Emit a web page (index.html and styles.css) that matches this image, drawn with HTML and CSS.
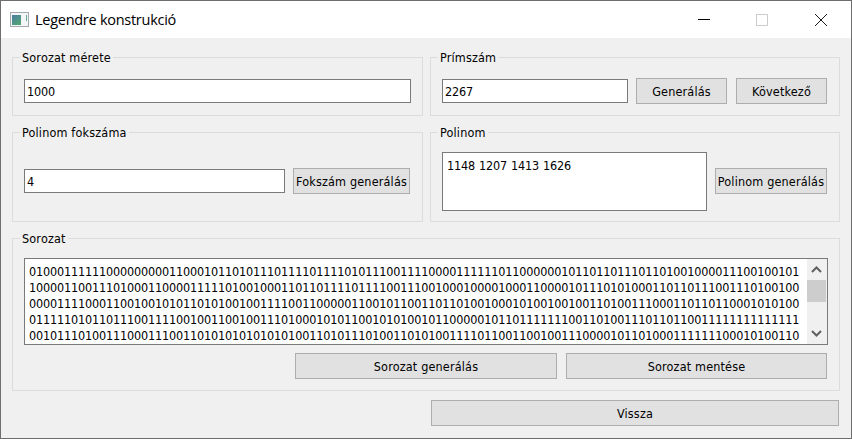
FILE: index.html
```html
<!DOCTYPE html>
<html lang="hu">
<head>
<meta charset="utf-8">
<title>Legendre konstrukció</title>
<link rel="stylesheet" href="styles.css">
</head>
<body>
<div class="window">
  <header class="titlebar">
    <svg class="app-icon" width="20" height="16" viewBox="0 0 20 16">
      <defs><linearGradient id="pane" x1="0" y1="0" x2="0.6" y2="1"><stop offset="0" stop-color="#4d7ba3"/><stop offset="1" stop-color="#4fa377"/></linearGradient></defs>
      <rect x="0.5" y="0.5" width="18" height="14" fill="#f3f5f6" stroke="#a3a9ad"/>
      <rect x="2" y="3" width="9" height="10" fill="url(#pane)"/>
      <rect x="16" y="3" width="1" height="6" fill="#62a792"/>
    </svg>
    <h1 class="title">Legendre konstrukció</h1>
    <svg class="controls" width="130" height="14" viewBox="0 0 130 14" fill="none">
      <path d="M0 6.5H12" stroke="#000"/>
      <rect x="58.5" y="1.5" width="11" height="11" stroke="#ccc"/>
      <path d="M117 1L129 13M129 1L117 13" stroke="#000" stroke-width="0.9"/>
    </svg>
  </header>
  <main class="content">
    <div class="row row-top">
      <section class="group group-left">
        <span class="legend">Sorozat mérete</span>
        <div class="field grow">1000</div>
      </section>
      <section class="group group-right">
        <span class="legend">Prímszám</span>
        <div class="field grow">2267</div>
        <div class="button b-gen"><span>Generálás</span></div>
        <div class="button b-next"><span>Következő</span></div>
      </section>
    </div>
    <div class="row row-mid">
      <section class="group group-left">
        <span class="legend">Polinom fokszáma</span>
        <div class="field grow">4</div>
        <div class="button b-degree"><span>Fokszám generálás</span></div>
      </section>
      <section class="group group-right">
        <span class="legend">Polinom</span>
        <div class="textarea poly grow">1148 1207 1413 1626</div>
        <div class="button b-poly"><span>Polinom generálás</span></div>
      </section>
    </div>
    <section class="group sequence">
      <span class="legend">Sorozat</span>
      <div class="textarea digits">
        <div class="lines">
          <div>01000111111000000000110001011010111011110111101011100111100001111110110000001011011011101101001000011100100101</div>
          <div>10000110011101000110000111110100100011011011110111100111001000100001000110000101110101000110110111001110100100</div>
          <div>00001111000110010010101101010010011110011000001100101100110110100100010100100100110100111000110110110001010100</div>
          <div>01111101011011100111100100110010011101000101011001010100101100000101101111111001101001110110110011111111111111</div>
          <div>00101110100111000111001101010101010101001101011101001101010011110110011001001110000101101000111111100010100110</div>
        </div>
        <div class="scrollbar">
          <svg class="arrow" width="19" height="21" viewBox="0 0 19 21"><path d="M5 13L9.5 8.5L14 13" fill="none" stroke="#606060" stroke-width="2"/></svg>
          <div class="thumb"></div>
          <svg class="arrow down" width="19" height="21" viewBox="0 0 19 21"><path d="M5 8L9.5 12.5L14 8" fill="none" stroke="#606060" stroke-width="2"/></svg>
        </div>
      </div>
      <div class="actions">
        <div class="button b-seq"><span>Sorozat generálás</span></div>
        <div class="button b-save"><span>Sorozat mentése</span></div>
      </div>
    </section>
    <div class="button b-back"><span>Vissza</span></div>
  </main>
</div>
</body>
</html>
```

FILE: styles.css
```css
* { box-sizing: border-box; }
body {
  margin: 0;
  font-family: "DejaVu Sans Condensed", "DejaVu Sans", sans-serif;
  font-stretch: condensed;
  font-size: 12.5px;
  line-height: 16px;
  letter-spacing: 0.17px;
  color: #000;
}
.window {
  width: 852px;
  height: 439px;
  border: 1px solid #6e6e6e;
  background: #f0f0f0;
}
.titlebar {
  display: flex;
  align-items: center;
  height: 37px;
  padding: 0 23px 0 9px;
  background: #fff;
}
.title {
  flex: 1;
  margin: 0 0 0 5px;
  font: 14.5px/20px "Open Sans", sans-serif;
  letter-spacing: -0.27px;
  white-space: nowrap;
}
.content {
  display: flex;
  flex-direction: column;
  padding: 19px 11px 0;
}
.row {
  display: flex;
  gap: 7px;
}
.row-top { height: 59px; margin-bottom: 16px; }
.row-mid { height: 90px; margin-bottom: 16px; }
.group {
  position: relative;
  border: 1px solid #dcdcdc;
}
.row .group {
  display: flex;
  align-items: center;
  padding: 9px 11px 0;
}
.row-mid .group { padding-top: 8px; }
.group-left { width: 411px; }
.group-right { width: 410px; }
.row .group-right { padding-right: 12px; }
.row-mid .group-left { padding-right: 12px; }
.legend {
  position: absolute;
  left: 7px;
  top: -8px;
  padding: 0 2px;
  background: #f0f0f0;
  white-space: nowrap;
}
.grow { flex: 1; }
.field {
  height: 24px;
  padding: 4px 2px 0;
  border: 1px solid #7a7a7a;
  background: #fff;
  letter-spacing: -0.15px;
}
.textarea {
  border: 1px solid #7a7a7a;
  background: #fff;
  letter-spacing: -0.15px;
  word-spacing: 0.6px;
}
.poly {
  height: 59px;
  padding: 5px 4px;
}
.button {
  display: flex;
  justify-content: center;
  height: 26px;
  padding-top: 5px;
  border: 1px solid #adadad;
  background: #e1e1e1;
  white-space: nowrap;
}
.b-gen { width: 91px; margin-left: 8px; }
.b-next { width: 91px; margin-left: 9px; }
.b-degree { width: 117px; margin-left: 8px; }
.b-poly { width: 112px; margin-left: 8px; }
.sequence {
  height: 153px;
  padding: 19px 11px 0;
}
.digits {
  display: flex;
  width: 804px;
  height: 87px;
}
.lines {
  flex: 1;
  padding: 5px 0 0 4px;
  overflow: hidden;
  white-space: nowrap;
}
.scrollbar {
  display: flex;
  flex-direction: column;
  width: 20px;
  background: #f0f0f0;
}
.arrow { display: block; }
.down { margin-top: auto; }
.thumb {
  height: 22px;
  width: 19px;
  background: #cdcdcd;
}
.actions {
  display: flex;
  justify-content: flex-end;
  gap: 9px;
  margin-top: 8px;
  padding-right: 1px;
}
.b-seq { width: 262px; }
.b-save { width: 261px; }
.b-back {
  align-self: flex-end;
  width: 408px;
  margin: 9px 1px 0 0;
}
```
